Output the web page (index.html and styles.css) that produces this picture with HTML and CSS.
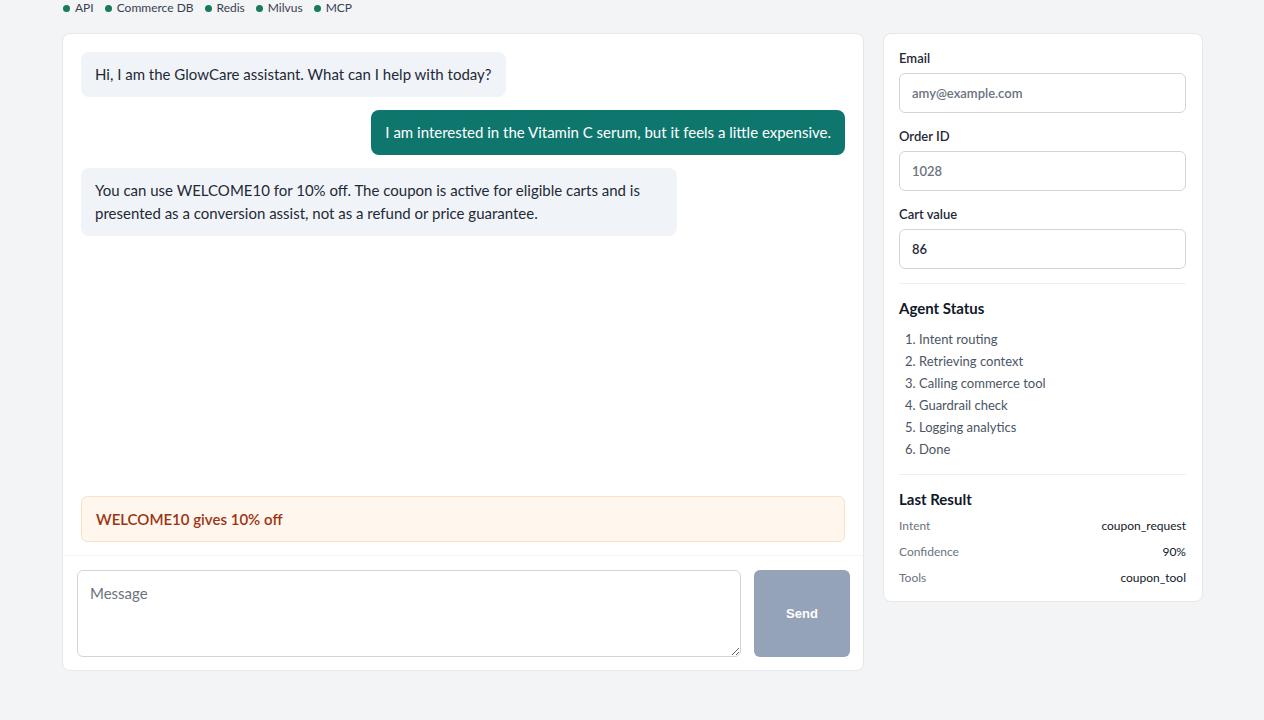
FILE: index.html
```html
<!DOCTYPE html>
<html lang="en">
<head>
    <meta charset="UTF-8">
    <meta name="viewport" content="width=device-width, initial-scale=1.0">
    <title>GlowCare Assistant</title>
    <link rel="stylesheet" href="styles.css">
</head>
<body>
    <div class="page">
        <div class="services">
            <span class="service"><span class="dot"></span>API</span>
            <span class="service"><span class="dot"></span>Commerce DB</span>
            <span class="service"><span class="dot"></span>Redis</span>
            <span class="service"><span class="dot"></span>Milvus</span>
            <span class="service"><span class="dot"></span>MCP</span>
        </div>

        <div class="layout">
            <div class="chat card">
                <div class="messages">
                    <div class="bubble bot">Hi, I am the GlowCare assistant. What can I help with today?</div>
                    <div class="bubble user">I am interested in the Vitamin C serum, but it feels a little expensive.</div>
                    <div class="bubble bot">You can use WELCOME10 for 10% off. The coupon is active for eligible carts and is presented as a conversion assist, not as a refund or price guarantee.</div>
                    <div class="notice">WELCOME10 gives 10% off</div>
                </div>
                <div class="composer">
                    <textarea placeholder="Message"></textarea>
                    <button disabled>Send</button>
                </div>
            </div>

            <div class="side card">
                <label for="email">Email</label>
                <input type="text" id="email" placeholder="amy@example.com">
                <label for="order">Order ID</label>
                <input type="text" id="order" placeholder="1028">
                <label for="cart">Cart value</label>
                <input type="text" id="cart" value="86">

                <div class="section">
                    <h3>Agent Status</h3>
                    <ol>
                        <li>Intent routing</li>
                        <li>Retrieving context</li>
                        <li>Calling commerce tool</li>
                        <li>Guardrail check</li>
                        <li>Logging analytics</li>
                        <li>Done</li>
                    </ol>
                </div>

                <div class="section result">
                    <h3>Last Result</h3>
                    <div class="row"><span>Intent</span><b>coupon_request</b></div>
                    <div class="row"><span>Confidence</span><b>90%</b></div>
                    <div class="row"><span>Tools</span><b>coupon_tool</b></div>
                </div>
            </div>
        </div>
    </div>
</body>
</html>
```

FILE: styles.css
```css
body {
    margin: 0;
    font-family: "Segoe UI", Lato, "Noto Sans", sans-serif;
    background-color: #f3f4f6;
    color: #1f2937;
}
.page {
    width: 1141px;
    margin-left: 62px;
}
.services {
    display: flex;
    gap: 11px;
    height: 16px;
    margin-bottom: 17px;
    padding-left: 1px;
    font-size: 12px;
    line-height: 16px;
    color: #374151;
}
.service {
    display: flex;
    align-items: center;
    gap: 5px;
}
.dot {
    width: 7px;
    height: 7px;
    border-radius: 50%;
    background: #187a5c;
}
.layout {
    display: grid;
    grid-template-columns: 1fr 320px;
    gap: 19px;
    align-items: start;
}
.card {
    background: white;
    border: 1px solid #e5e7eb;
    border-radius: 8px;
}
.chat {
    height: 636px;
    display: flex;
    flex-direction: column;
}
.messages {
    flex: 1;
    display: flex;
    flex-direction: column;
    gap: 13px;
    padding: 18px 18px 13px;
    border-bottom: 1px solid #f1f3f6;
}
.bubble {
    box-sizing: border-box;
    max-width: 78%;
    padding: 11px 14px;
    border-radius: 8px;
    font-size: 15px;
    line-height: 23px;
}
.bot {
    align-self: flex-start;
    background: #f0f4f8;
}
.user {
    align-self: flex-end;
    background: #0f766e;
    color: white;
}
.notice {
    margin-top: auto;
    padding: 11px 14px;
    background: #fff6ed;
    border: 1px solid #fbe0c4;
    border-radius: 6px;
    color: #9a3412;
    font-size: 15px;
    font-weight: 600;
    line-height: 22px;
}
.composer {
    display: flex;
    gap: 13px;
    padding: 14px 13px 13px 14px;
}
textarea {
    flex: 1;
    height: 87px;
    box-sizing: border-box;
    padding: 13px 12px 11px;
    border: 1px solid #d1d5db;
    border-radius: 6px;
    font-family: inherit;
    font-size: 15px;
}
textarea::placeholder {
    color: #6b7280;
}
button {
    width: 96px;
    height: 87px;
    border: none;
    border-radius: 6px;
    background-color: #94a3b8;
    color: white;
    font-family: "Liberation Sans", Arial, sans-serif;
    font-size: 13px;
    font-weight: bold;
}
.side {
    padding: 15px 16px 14px 15px;
}
label {
    display: block;
    font-size: 13px;
    font-weight: 600;
    line-height: 18px;
    margin-bottom: 6px;
    color: #1f2937;
}
input {
    display: block;
    width: 100%;
    height: 40px;
    box-sizing: border-box;
    padding: 0 12px;
    margin-bottom: 14px;
    border: 1px solid #d1d5db;
    border-radius: 6px;
    font-family: inherit;
    font-size: 13px;
    font-weight: 600;
    color: #1f2937;
}
input::placeholder {
    color: #6b7280;
}
.section {
    border-top: 1px solid #eceff3;
    padding-top: 13px;
}
.section + .section {
    margin-top: 14px;
}
h3 {
    margin: 0 0 9px;
    font-size: 15px;
    line-height: 22px;
    color: #111827;
}
.result h3 {
    margin-bottom: 7px;
}
ol {
    margin: 0;
    padding-left: 20px;
    font-size: 13px;
    line-height: 22px;
    color: #4b5563;
}
.row {
    display: flex;
    justify-content: space-between;
    font-size: 12px;
    line-height: 18px;
    margin-bottom: 8px;
    color: #6b7280;
}
.row:last-child {
    margin-bottom: 0;
}
.row b {
    font-weight: normal;
    color: #111827;
}
```
